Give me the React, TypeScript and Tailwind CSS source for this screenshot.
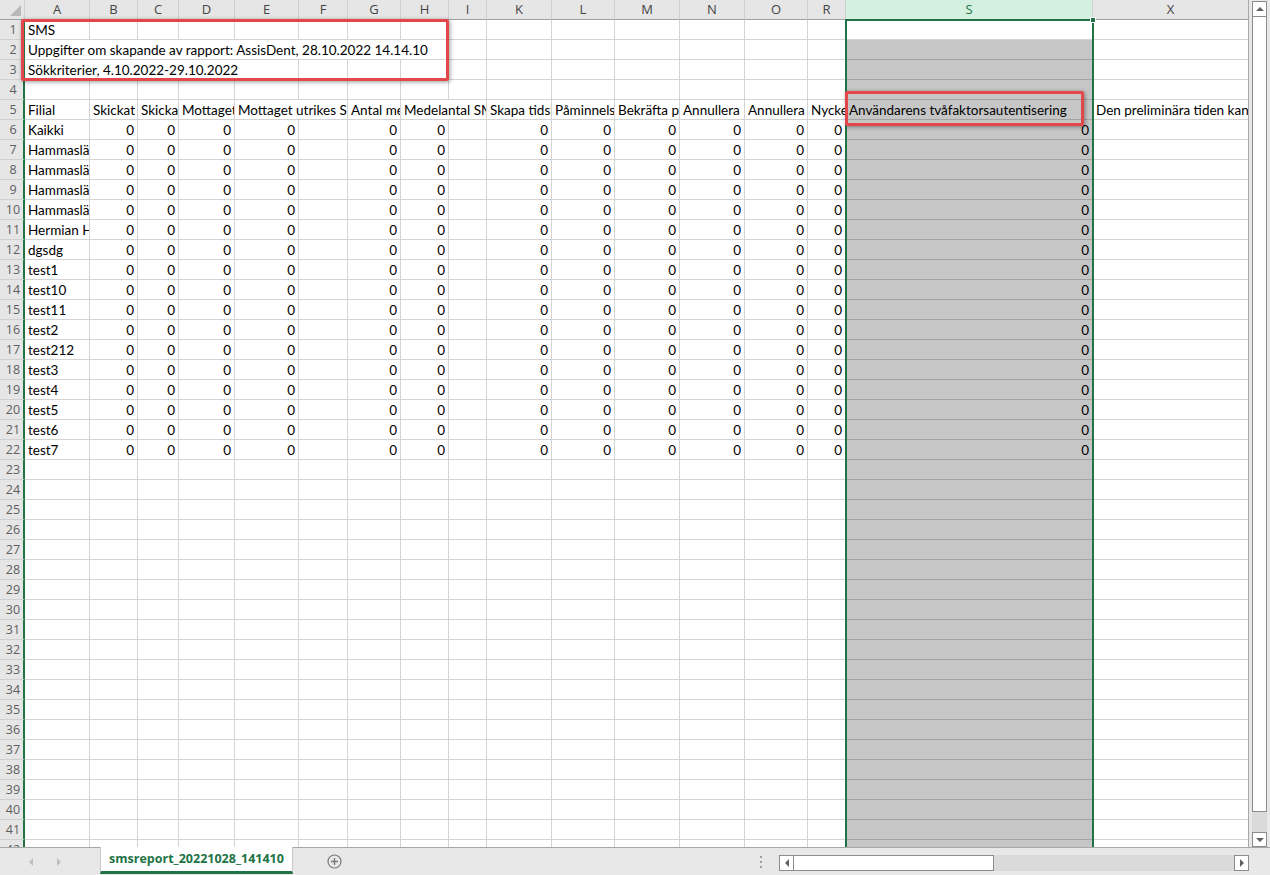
import React from "react";

type Cell = { t: string; num?: boolean; span?: number };

// column letters shown in the sheet (some columns are hidden, so J, P, Q, T-W are missing)
const columns = ["A", "B", "C", "D", "E", "F", "G", "H", "I", "K", "L", "M", "N", "O", "R", "S", "X"];

const GRID =
  "grid grid-cols-[25px_65px_48px_41px_56px_64px_49px_53px_48px_38px_65px_63px_65px_65px_63px_38px_247px_156px]";

const spanClass: Record<number, string> = {
  2: "col-span-2",
  5: "col-span-5",
  8: "col-span-8",
};

const numericCols = ["B", "C", "D", "E", "G", "H", "K", "L", "M", "N", "O", "R", "S"];

const branches = [
  "Kaikki",
  "Hammaslääkäri",
  "Hammaslääkäri",
  "Hammaslääkäri",
  "Hammaslääkäri",
  "Hermian Hammas",
  "dgsdg",
  "test1",
  "test10",
  "test11",
  "test2",
  "test212",
  "test3",
  "test4",
  "test5",
  "test6",
  "test7",
];

const buildRows = () => {
  const rows: Record<number, Record<string, Cell>> = {
    1: { A: { t: "SMS" } },
    2: { A: { t: "Uppgifter om skapande av rapport: AssisDent, 28.10.2022 14.14.10", span: 8 } },
    3: { A: { t: "Sökkriterier, 4.10.2022-29.10.2022", span: 5 } },
    5: {
      A: { t: "Filial" },
      B: { t: "Skickat" },
      C: { t: "Skickade" },
      D: { t: "Mottaget" },
      E: { t: "Mottaget utrikes SMS", span: 2 },
      G: { t: "Antal meddelanden" },
      H: { t: "Medelantal SMS", span: 2 },
      K: { t: "Skapa tidsbokning" },
      L: { t: "Påminnelse" },
      M: { t: "Bekräfta pass" },
      N: { t: "Annullera" },
      O: { t: "Annullera" },
      R: { t: "Nyckeltal" },
      S: { t: "Användarens tvåfaktorsautentisering" },
      X: { t: "Den preliminära tiden kan" },
    },
  };
  branches.forEach((name, i) => {
    const row: Record<string, Cell> = { A: { t: name } };
    numericCols.forEach((c) => (row[c] = { t: "0", num: true }));
    rows[6 + i] = row;
  });
  return rows;
};

const rows = buildRows();
const rowNumbers = Array.from({ length: 42 }, (_, i) => i + 1);

const SheetRow: React.FC<{ n: number }> = ({ n }) => {
  const data = rows[n] || {};
  const cells: React.ReactNode[] = [];
  let skip = 0;
  columns.forEach((col) => {
    if (skip > 0) {
      skip--;
      return;
    }
    const cell = data[col];
    const span = cell?.span ?? 1;
    skip = span - 1;
    const isS = col === "S";
    const bg = isS ? (n === 1 ? "bg-white border-b-[#d4d4d4]" : "bg-[#c6c6c6] border-b-[#a3a3a3]") : "bg-white border-b-[#d4d4d4]";
    cells.push(
      <div
        key={col}
        className={`h-[20px] border-b border-r border-r-[#d4d4d4] overflow-hidden whitespace-nowrap px-[3px] leading-[20px] ${bg} ${
          span > 1 ? spanClass[span] : ""
        } ${cell?.num ? "text-right" : "text-left"}`}
      >
        {cell?.t}
      </div>
    );
  });

  return (
    <div className={GRID}>
      <div className="h-[20px] bg-[#e6e6e6] border-b border-b-[#d0d0d0] border-r-2 border-r-[#217346] text-center pl-[3px] leading-[19px] text-[12.5px] text-[#5e5e5e] font-['Open_Sans',sans-serif]">
        {n}
      </div>
      {cells}
    </div>
  );
};

const HeaderRow: React.FC = () => (
  <div className={`${GRID} font-['Open_Sans',sans-serif] text-[13px]`}>
    <div className="relative h-[20px] bg-[#e6e6e6] border-r border-b border-r-[#cfcfcf] border-b-[#a0a0a0]">
      <svg className="absolute right-[3px] bottom-[3px]" width="11" height="11" viewBox="0 0 11 11">
        <polygon points="11,0 11,11 0,11" fill="#b8b8b8" />
      </svg>
    </div>
    {columns.map((col) => (
      <div
        key={col}
        className={`h-[20px] border-r border-b border-r-[#d0d0d0] border-b-[#a0a0a0] text-center leading-[19px] ${
          col === "S" ? "bg-[#d3f0e0] text-[#217346]" : "bg-[#e6e6e6] text-[#444444]"
        }`}
      >
        {col}
      </div>
    ))}
  </div>
);

const Arrow: React.FC<{ dir: "up" | "down" | "left" | "right"; color?: string }> = ({ dir, color = "#606060" }) => {
  const pts = {
    up: "0,5 4,1 8,5",
    down: "0,1 4,5 8,1",
    left: "5,0 1,4 5,8",
    right: "1,0 5,4 1,8",
  }[dir];
  const vertical = dir === "up" || dir === "down";
  return (
    <svg width={vertical ? 8 : 6} height={vertical ? 6 : 8} viewBox={vertical ? "0 0 8 6" : "0 0 6 8"}>
      <polygon points={pts} fill={color} />
    </svg>
  );
};

const App: React.FC = () => {
  return (
    <div className="w-[1270px] h-[875px] overflow-hidden bg-white flex flex-col font-['Lato',sans-serif] text-[13.5px] text-black">
      <div className="flex h-[847px]">
        {/* sheet grid */}
        <div className="relative w-[1249px] h-[847px] overflow-hidden border-r border-r-[#a8a8a8]">
          <HeaderRow />
          {rowNumbers.map((n) => (
            <SheetRow key={n} n={n} />
          ))}

          {/* selected column S */}
          <div className="absolute left-[845px] top-[19px] w-[249px] h-[840px] border-2 border-[#217346]" />
          <div className="absolute left-[1090px] top-[17px] w-[6px] h-[6px] bg-[#217346] border border-white" />

          {/* highlight boxes */}
          <div className="absolute left-[21px] top-[19px] w-[428px] h-[62px] border-[3px] border-[#e2474b] rounded-[2px] shadow-[1px_1px_4px_rgba(0,0,0,0.4)]" />
          <div className="absolute left-[845px] top-[91px] w-[239px] h-[35px] border-[3px] border-[#e2474b] rounded-[2px] shadow-[1px_1px_4px_rgba(0,0,0,0.4)]" />
        </div>

        {/* vertical scrollbar */}
        <div className="w-[21px] bg-[#e8e8e8] flex flex-col pl-[3px] pr-[3px] pt-[1px]">
          <div className="h-[16px] bg-white border border-[#8c8c8c] flex items-center justify-center">
            <Arrow dir="up" />
          </div>
          <div className="h-[795px] bg-white border border-t-0 border-[#8c8c8c]" />
          <div className="flex-1 bg-[#dadada]" />
          <div className="h-[15px] bg-white border border-[#8c8c8c] flex items-center justify-center">
            <Arrow dir="down" />
          </div>
        </div>
      </div>

      {/* sheet tabs and horizontal scrollbar */}
      <div className="h-[28px] bg-[#e8e8e8] border-t border-t-[#a8a8a8] flex items-start">
        <div className="w-[100px] h-full flex items-center gap-[22px] pl-[28px]">
          <Arrow dir="left" color="#c0c0c0" />
          <Arrow dir="right" color="#c0c0c0" />
        </div>
        <div className="w-[193px] h-[27px] -mt-[1px] bg-white border-x border-x-[#c8c8c8] border-b-[3px] border-b-[#217346] flex items-center justify-center font-['Open_Sans',sans-serif] font-bold text-[12.5px] text-[#217346]">
          smsreport_20221028_141410
        </div>
        <div className="ml-[34px] h-full flex items-center">
          <svg width="15" height="15" viewBox="0 0 15 15">
            <circle cx="7.5" cy="7.5" r="6.5" fill="none" stroke="#7a7a7a" strokeWidth="1.2" />
            <path d="M7.5 4v7M4 7.5h7" stroke="#7a7a7a" strokeWidth="1.4" />
          </svg>
        </div>
        <div className="flex-1" />
        <div className="h-full flex flex-col items-center justify-center gap-[3px] mr-[17px]">
          <span className="w-[2px] h-[2px] bg-[#a0a0a0]" />
          <span className="w-[2px] h-[2px] bg-[#a0a0a0]" />
          <span className="w-[2px] h-[2px] bg-[#a0a0a0]" />
        </div>
        <div className="w-[470px] h-[16px] mt-[7px] flex">
          <div className="w-[15px] h-full bg-white border border-[#8c8c8c] flex items-center justify-center">
            <Arrow dir="left" />
          </div>
          <div className="w-[200px] h-full bg-white border border-l-0 border-[#8c8c8c]" />
          <div className="flex-1 h-full bg-[#dadada]" />
          <div className="w-[15px] h-full bg-white border border-[#8c8c8c] flex items-center justify-center">
            <Arrow dir="right" />
          </div>
        </div>
        <div className="w-[21px]" />
      </div>
    </div>
  );
};

export default App;
